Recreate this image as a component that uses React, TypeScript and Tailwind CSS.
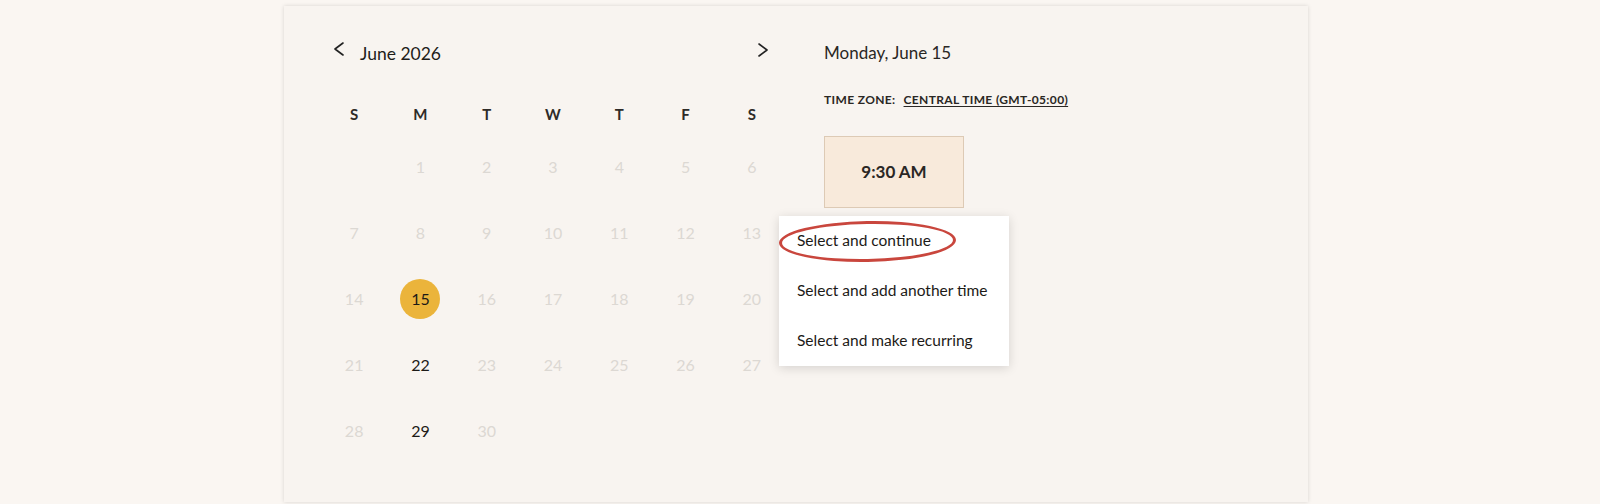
import React from 'react';

const WEEKDAYS = ['S', 'M', 'T', 'W', 'T', 'F', 'S'];

// June 2026 starts on a Monday; leading null pads the Sunday slot
const WEEKS: (number | null)[][] = [
  [null, 1, 2, 3, 4, 5, 6],
  [7, 8, 9, 10, 11, 12, 13],
  [14, 15, 16, 17, 18, 19, 20],
  [21, 22, 23, 24, 25, 26, 27],
  [28, 29, 30, null, null, null, null],
];

const AVAILABLE = [22, 29];
const SELECTED = 15;

const MENU_ITEMS = ['Select and continue', 'Select and add another time', 'Select and make recurring'];

function Chevron({ dir }: { dir: 'left' | 'right' }) {
  return (
    <svg width="12" height="14" viewBox="0 0 12 14" fill="none">
      <polyline
        points={dir === 'left' ? '10,1 2,7 10,13' : '2,1 10,7 2,13'}
        stroke="#222"
        strokeWidth="1.6"
        strokeLinecap="round"
        strokeLinejoin="round"
      />
    </svg>
  );
}

function DayCell({ day }: { day: number | null }) {
  if (day === null) return <div className="h-[66px]" />;
  const isSelected = day === SELECTED;
  const isAvailable = AVAILABLE.includes(day);

  return (
    <div className="h-[66px] flex items-center justify-center">
      {isSelected ? (
        <span className="w-[40px] h-[40px] rounded-full bg-[#ebb43b] flex items-center justify-center text-[16px] text-[#1c1a17]">
          {day}
        </span>
      ) : (
        <span className={`text-[16px] ${isAvailable ? 'text-[#1c1a17]' : 'text-[#dcd8d3]'}`}>{day}</span>
      )}
    </div>
  );
}

export default function App() {
  return (
    <div
      className="min-h-[504px] bg-[#faf6f2] pt-[6px] pl-[284px]"
      style={{ fontFamily: 'Lato, "Open Sans", sans-serif' }}
    >
      <div className="relative w-[1024px] h-[496px] bg-[#f8f4f0] shadow-[0_0_4px_rgba(0,0,0,0.14)] flex pt-[32px] pl-[37px]">
        {/* Calendar */}
        <div className="w-[464px]">
          <div className="h-[24px] flex items-center justify-between pl-[12px] pr-[16px]">
            <div className="flex items-center gap-[15px]">
              <span className="-mt-[3px]">
                <Chevron dir="left" />
              </span>
              <span className="text-[17.5px] text-[#1f1d1a] mt-[8px]">June 2026</span>
            </div>
            <Chevron dir="right" />
          </div>

          <div className="grid grid-cols-7 mt-[32px]">
            {WEEKDAYS.map((d, i) => (
              <div key={i} className="h-[40px] flex items-center justify-center text-[15px] font-bold text-[#2e2b28]">
                {d}
              </div>
            ))}
          </div>

          <div className="grid grid-cols-7">
            {WEEKS.flat().map((day, i) => (
              <DayCell key={i} day={day} />
            ))}
          </div>
        </div>

        {/* Time slots */}
        <div className="ml-[39px] pt-[3px]">
          <p className="text-[17px] text-[#2a2724] leading-[24px]">Monday, June 15</p>
          <p className="mt-[27px] text-[12px] font-bold text-[#2a2724] tracking-[0.03em] leading-[16px]">
            TIME ZONE:
            <span className="ml-[8px] underline underline-offset-2">CENTRAL TIME (GMT-05:00)</span>
          </p>
          <button className="mt-[28px] w-[140px] h-[72px] bg-[#f8eadb] border border-[#ddcab5] text-[17px] font-bold text-[#2a2724] flex items-center justify-center">
            9:30 AM
          </button>
        </div>

        {/* Slot action menu */}
        <div className="absolute left-[495px] top-[210px] w-[230px] bg-white shadow-[0_2px_10px_rgba(0,0,0,0.14)]">
          {MENU_ITEMS.map((item) => (
            <div key={item} className="h-[50px] flex items-center pl-[18px] text-[15.5px] text-[#1c1a17]">
              {item}
            </div>
          ))}
          <div className="absolute left-0 top-[5px] w-[177px] h-[41px] rounded-[50%] border-[3px] border-[#c9463d] -rotate-[1deg]" />
        </div>
      </div>
    </div>
  );
}
